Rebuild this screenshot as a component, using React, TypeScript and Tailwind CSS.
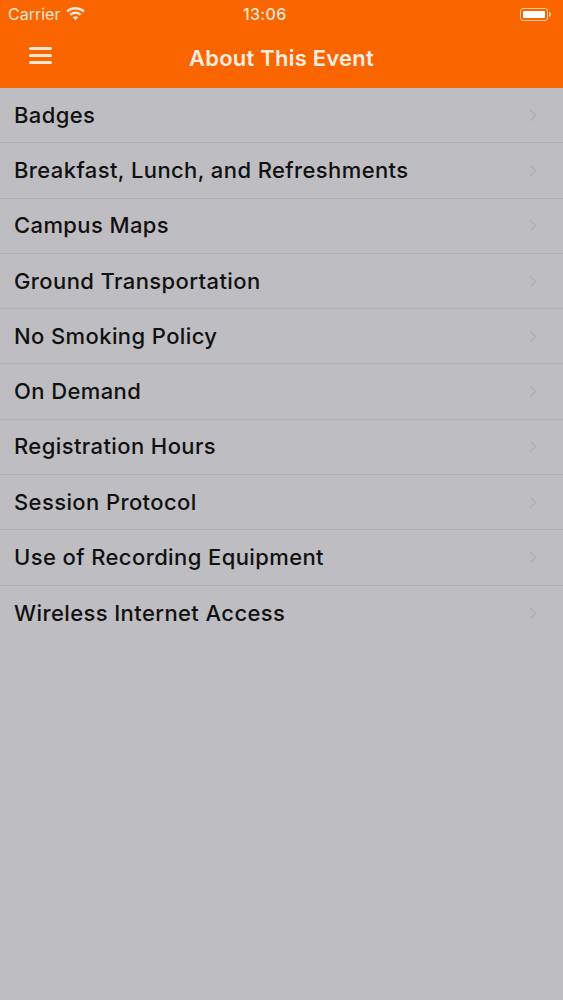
const items = [
  "Badges",
  "Breakfast, Lunch, and Refreshments",
  "Campus Maps",
  "Ground Transportation",
  "No Smoking Policy",
  "On Demand",
  "Registration Hours",
  "Session Protocol",
  "Use of Recording Equipment",
  "Wireless Internet Access",
];

function Wifi() {
  return (
    <svg width="19" height="14" viewBox="0 0 19 14" fill="#fde7d6">
      <path d="M9.5 0C5.9 0 2.7 1.4 0.3 3.6l1.7 1.8C3.9 3.6 6.6 2.5 9.5 2.5s5.6 1.1 7.5 2.9l1.7-1.8C16.3 1.4 13.1 0 9.5 0z" />
      <path d="M9.5 4.6c-2.3 0-4.4 0.9-6 2.4l1.7 1.8C6.3 7.7 7.8 7.1 9.5 7.1s3.2 0.6 4.3 1.7l1.7-1.8c-1.6-1.5-3.7-2.4-6-2.4z" />
      <path d="M9.5 9.2c-1.1 0-2.1 0.4-2.8 1.1L9.5 13.3l2.8-3C11.6 9.6 10.6 9.2 9.5 9.2z" />
    </svg>
  );
}

function Chevron() {
  return (
    <svg width="8" height="13" viewBox="0 0 8 13" fill="none">
      <path d="M1.5 1.5l5 5-5 5" stroke="#b0afb4" strokeWidth="1.5" strokeLinecap="round" strokeLinejoin="round" />
    </svg>
  );
}

export default function App() {
  return (
    <div className="flex min-h-[1000px] w-full flex-col bg-[#bebdc2] font-['Inter',sans-serif]">
      <div className="bg-[#fb6500]">
        <div className="flex h-[28px] items-center pl-[8px] pr-[12px] text-[16px] text-[#fde7d6]">
          <div className="flex w-[235px] items-center gap-[6px]">
            <span>Carrier</span>
            <Wifi />
          </div>
          <span className="w-[40px] text-center font-medium tracking-[0.02em]">13:06</span>
          <div className="flex flex-1 items-center justify-end">
            <div className="flex h-[13px] w-[28px] items-center rounded-[3px] border border-[#fdc9a3] p-[2px]">
              <div className="h-full w-full rounded-[1px] bg-white" />
            </div>
            <div className="ml-[1px] h-[5px] w-[2px] rounded-r-sm bg-[#fdc9a3]" />
          </div>
        </div>
        <div className="relative flex h-[60px] items-center justify-center">
          <div className="absolute left-[29px] top-[19px] flex w-[23px] flex-col gap-[4px]">
            <div className="h-[3px] rounded-full bg-[#fde7d6]" />
            <div className="h-[3px] rounded-full bg-[#fde7d6]" />
            <div className="h-[3px] rounded-full bg-[#fde7d6]" />
          </div>
          <h1 className="text-[22px] font-semibold tracking-[0.01em] text-[#fdeee3]">About This Event</h1>
        </div>
      </div>
      <ul className="flex flex-col">
        {items.map((item, i) => (
          <li
            key={item}
            className={
              "flex h-[55.3px] items-center justify-between pl-[14px] pr-[26px] " +
              (i < items.length - 1 ? "border-b border-[#afaeb3]" : "")
            }
          >
            <span className="text-[22px] font-medium tracking-[0.018em] text-[#111111]">{item}</span>
            <Chevron />
          </li>
        ))}
      </ul>
    </div>
  );
}
